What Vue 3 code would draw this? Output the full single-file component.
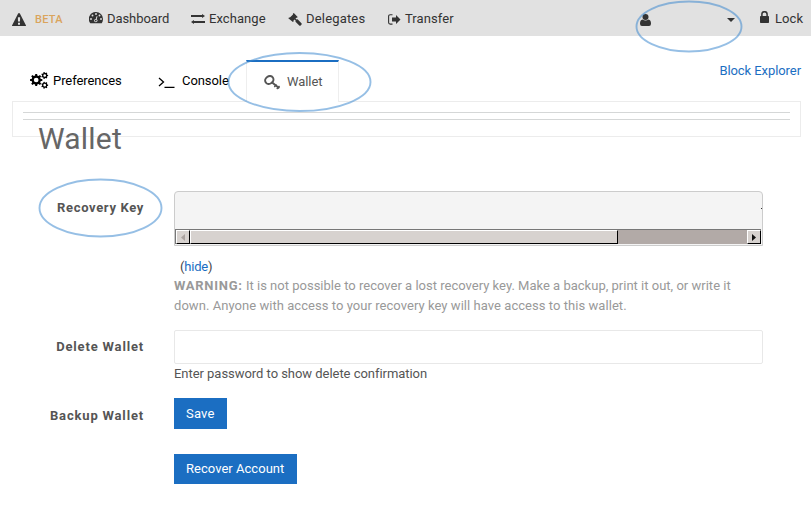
<script setup>
const toothed = (cx, cy, r, n) => {
  const pts = []
  for (let i = 0; i < n; i++) {
    for (const [o, k] of [[-0.3, 0.76], [-0.2, 1], [0.2, 1], [0.3, 0.76]]) {
      const a = ((i + o) * 2 * Math.PI) / n
      pts.push(`${(cx + r * k * Math.cos(a)).toFixed(2)} ${(cy + r * k * Math.sin(a)).toFixed(2)}`)
    }
  }
  const h = r * 0.38
  return `M${pts.join('L')}ZM${cx - h} ${cy}a${h} ${h} 0 1 0 ${2 * h} 0a${h} ${h} 0 1 0 ${-2 * h} 0Z`
}
const gears = toothed(6.2, 8, 6.2, 8) + toothed(14.7, 3.5, 3.5, 7) + toothed(14.7, 13.2, 3.5, 7)
</script>

<template>
  <div class="page">
    <header class="topbar">
      <div class="item beta">
        <svg class="i-warn" width="14" height="13" viewBox="0 0 1792 1550" preserveAspectRatio="none"><path d="M1024 1375v-190q0-14-9.5-23.5t-22.5-9.5h-192q-13 0-22.5 9.5t-9.5 23.5v190q0 14 9.5 23.5t22.5 9.5h192q13 0 22.5-9.5t9.5-23.5zm-2-374l18-459q0-12-10-19-13-11-24-11h-220q-11 0-24 11-10 7-10 21l17 457q0 10 10 16.5t24 6.5h185q14 0 23.5-6.5t10.5-16.5zm-14-934l768 1408q35 63-2 126-17 29-46.5 46t-63.5 17h-1536q-34 0-63.5-17t-46.5-46q-37-63-2-126l768-1408q17-31 47-49t65-18 65 18 47 49z" /></svg>
        <span>BETA</span>
      </div>
      <div class="item dash">
        <svg width="14" height="12" viewBox="0 0 14 12"><path d="M7 0a7 7 0 0 1 7 7c0 1.5-.4 2.900-1.100 4q-.2.300-.6.300H1.700q-.4 0-.6-.3A7 7 0 0 1 7 0z" /><g fill="#e1e1e1"><circle cx="2" cy="7" r=".95" /><circle cx="3.500" cy="3.500" r=".95" /><circle cx="7" cy="2" r=".95" /><circle cx="10.500" cy="3.500" r=".95" /><circle cx="12" cy="7" r=".95" /><circle cx="6.800" cy="8.600" r="1.700" /></g><path d="M6.800 8.600L8 4.300" stroke="#e1e1e1" stroke-width="1" /><circle cx="6.800" cy="8.600" r=".9" /></svg>
        <span>Dashboard</span>
      </div>
      <div class="item exch">
        <svg width="14" height="10" viewBox="0 0 14 10"><path d="M0 1h11V0l3 2-3 2V3H0zM14 7H3V6L0 8l3 2V9h11z" /></svg>
        <span>Exchange</span>
      </div>
      <div class="item dele">
        <svg width="14" height="13" viewBox="0 0 14 13"><path d="M5.800 0L9.700 3.900 9 4.800 8.300 4.700 7.500 5.600 8.500 6.600 9.600 6.200 13.700 10.500 13.600 11.500 12.400 12.700 11.500 12.700 7.500 8.700 7.600 7.600 6.500 6.500 5.500 7.500 5.700 8.200 4.900 9 .3 5.200 1 4.400 1.900 4.500 5 1.500 4.900.7z" /></svg>
        <span>Delegates</span>
      </div>
      <div class="item tran">
        <svg width="13" height="11" viewBox="0 0 13 11"><path d="M4.500.800H2.200Q.6.800.6 2.300v6.200Q.6 10.100 2.200 10.100h2.300" fill="none" stroke="#333" stroke-width="1.100" /><path d="M4 3.500h4V1l4.500 4.500L8 10V7.500H4z" /></svg>
        <span>Transfer</span>
      </div>
      <div class="item user">
        <svg width="11" height="12" viewBox="0 0 11 12"><circle cx="5.500" cy="3" r="3" /><path d="M2.500 5.400Q5.500 7.700 8.500 5.400 11 5.700 11 9.700 11 12 9 12H2Q0 12 0 9.700 0 5.700 2.500 5.400z" /></svg>
        <svg class="caret" width="8" height="4" viewBox="0 0 8 4"><path d="M0 0h8L4 4z" /></svg>
      </div>
      <div class="item lock">
        <svg width="9" height="12" viewBox="0 0 9 12"><path d="M1.900 6V3.300a2.600 2.600 0 0 1 5.200 0V6" fill="none" stroke="#333" stroke-width="1.500" /><rect y="5" width="9" height="7" rx=".7" /></svg>
        <span>Lock</span>
      </div>
    </header>

    <nav class="tabs">
      <div class="tab prefs">
        <svg width="19" height="17" viewBox="0 0 19 17"><path :d="gears" fill-rule="evenodd" /></svg>
        <span>Preferences</span>
      </div>
      <div class="tab console">
        <svg width="17" height="11" viewBox="0 0 17 11" fill="none" stroke="#000" stroke-width="1.300"><path d="M1 1l4.500 4L1 9M6.500 10.300h10" /></svg>
        <span>Console</span>
      </div>
      <div class="tab active">
        <svg width="17" height="15" viewBox="0 0 17 15"><g fill="none" stroke="#555"><ellipse cx="5.300" cy="5" rx="4.300" ry="3.700" stroke-width="2" transform="rotate(-35 5.300 5)" /><path d="M7.500 7L15.300 13.300" stroke-width="2" /><path d="M10.300 12l2.200-2.500M12.800 14l2.700-3" stroke-width="1.400" /></g></svg>
        <span>Wallet</span>
      </div>
      <a class="explorer">Block Explorer</a>
    </nav>
    <div class="panel"><div class="rules"></div></div>

    <main>
      <h1>Wallet</h1>
      <div class="row recovery">
        <label>Recovery Key</label>
        <div class="field">
          <div class="keybox">
            <div class="keytext"><i></i></div>
            <div class="scroll">
              <div class="btn"><svg width="4" height="7" viewBox="0 0 4 7"><path d="M4 0v7L0 3.500z" fill="#aaa29f" /></svg></div>
              <div class="thumb"></div>
              <div class="track"></div>
              <div class="btn right"><svg width="4" height="7" viewBox="0 0 4 7"><path d="M0 0v7l4-3.500z" fill="#111" /></svg></div>
            </div>
          </div>
          <div class="hide">(<a>hide</a>)</div>
          <p><span class="w1"><b>WARNING:</b> It is not possible to recover a lost recovery key. Make a backup, print it out, or write it</span><br><span class="w2">down. Anyone with access to your recovery key will have access to this wallet.</span></p>
        </div>
      </div>
      <div class="row delete">
        <label>Delete Wallet</label>
        <div class="field">
          <input type="password">
          <div class="hint">Enter password to show delete confirmation</div>
        </div>
      </div>
      <div class="row backup">
        <label>Backup Wallet</label>
        <div class="field"><button class="save">Save</button></div>
      </div>
      <div class="row recover">
        <div></div>
        <div class="field"><button class="account">Recover Account</button></div>
      </div>
    </main>

    <svg class="marks" width="811" height="510" viewBox="0 0 811 510">
      <ellipse cx="689" cy="26.500" rx="52.500" ry="25" />
      <ellipse cx="299.500" cy="82" rx="71" ry="29" />
      <ellipse cx="100.500" cy="208" rx="61" ry="28.500" />
    </svg>
  </div>
</template>

<style>
body { margin: 0; background: #fff; }
</style>

<style scoped>
* { box-sizing: border-box; }
.page { position: relative; width: 811px; height: 510px; overflow: hidden; font: 13px/20px Roboto, "Liberation Sans", sans-serif; color: #444; letter-spacing: -.07px; }
svg { flex: none; display: block; }
.topbar { height: 36px; padding: 0 0 0 12px; background: #e1e1e1; display: grid; grid-template-columns: 77px 102px 97px 100px 252px 120px 51px; fill: #333; color: #333; }
.item { display: flex; align-items: center; height: 37px; white-space: nowrap; }
.beta svg { margin: 2px 9px 0 0; }
.beta span { margin-top: 2px; font-size: 11px; font-weight: 500; color: #daa45c; letter-spacing: .25px; }
.dash svg { margin: -2px 4px 0 0; }
.exch svg { margin-right: 4px; }
.exch span, .tran span { letter-spacing: .07px; }
.dele span { letter-spacing: .18px; }
.dele svg { margin: 2px 4px 0 0; }
.tran svg { margin: 2px 4px 0 0; }
.user svg { margin-top: 2px; }
.user .caret { margin: 3px 0 0 76px; }
.lock svg { margin: -3px 6px 0 0; }
.lock span { letter-spacing: .1px; }
.tabs { height: 65px; padding: 0 10px 0 30px; display: flex; align-items: flex-end; color: #000; white-space: nowrap; }
.tab { display: flex; align-items: center; height: 41px; }
.prefs { width: 128px; }
.prefs svg { margin-right: 4px; }
.console { width: 88px; }
.console svg { margin: 3px 7px 0 0; }
.active { width: 93px; height: 42px; margin-bottom: -1px; padding-left: 17px; position: relative; z-index: 1; background: #fff; border: solid #eee; border-width: 0 1px; border-top: 2px solid #1b6ec2; color: #555; }
.active svg { margin-right: 6px; }
.explorer { margin: 0 0 20px auto; color: #1b6ec2; }
.panel { margin: 0 10px 0 12px; height: 36px; padding: 10px; border: 1px solid #ececec; }
.rules { height: 8px; border: solid #d5d7d7; border-width: 1px 0; }
main { position: relative; }
h1 { margin: -19px 0 0 38px; height: 42px; font-size: 30px; line-height: 42px; font-weight: 400; color: #666; letter-spacing: .2px; }
.row { display: grid; grid-template-columns: 144px 589px; column-gap: 30px; }
.recovery { margin-top: 31px; height: 139px; }
.delete { height: 68px; }
.backup { height: 56px; }
label { text-align: right; font-weight: 700; color: #555; letter-spacing: .83px; }
.recovery label { margin-top: 7px; letter-spacing: .65px; }
.delete label { margin-top: 7px; }
.backup label { margin-top: 8px; }
.keybox { height: 55px; border: 1px solid #ccc; border-radius: 4px 4px 0 0; background: #f4f4f4; }
.keytext { height: 37px; display: flex; justify-content: flex-end; }
.keytext i { width: 1px; height: 1px; background: #333; margin-top: 16px; }
.scroll { height: 15px; width: 586px; border-top: 1px solid #777; border-left: 1px solid #777; display: flex; background: #b2aaa7; }
.btn, .thumb { background: #d7d2cf; border: 1px solid #fff; border-right-color: #000; border-bottom-color: #000; }
.btn { width: 14px; display: flex; align-items: center; justify-content: center; }
.thumb { width: 428px; }
.track { flex: 1; }
.hide { margin: 11px 0 0 6px; letter-spacing: -.2px; }
.hide a { color: #1b6ec2; }
p { margin: -1px 0 0; color: #999; white-space: nowrap; }
.w1 { letter-spacing: .01px; }
.w1 b { letter-spacing: .73px; }
.w2 { letter-spacing: .05px; }
input { display: block; width: 589px; height: 34px; border: 1px solid #e8e8e8; border-radius: 2px; outline: 0; background: #fff; }
.hint { color: #555; letter-spacing: -.04px; }
button { display: block; border: 0; padding: 0 0 0 12px; text-align: left; background: #1b6ec2; color: #fff; font: 13px/30px Roboto, "Liberation Sans", sans-serif; letter-spacing: .03px; }
.save { width: 53px; height: 31px; letter-spacing: .2px; }
.account { width: 123px; height: 30px; }
.marks { position: absolute; left: 0; top: 0; pointer-events: none; fill: none; stroke: #408bd0; stroke-opacity: .55; stroke-width: 1.900; z-index: 2; }
</style>
